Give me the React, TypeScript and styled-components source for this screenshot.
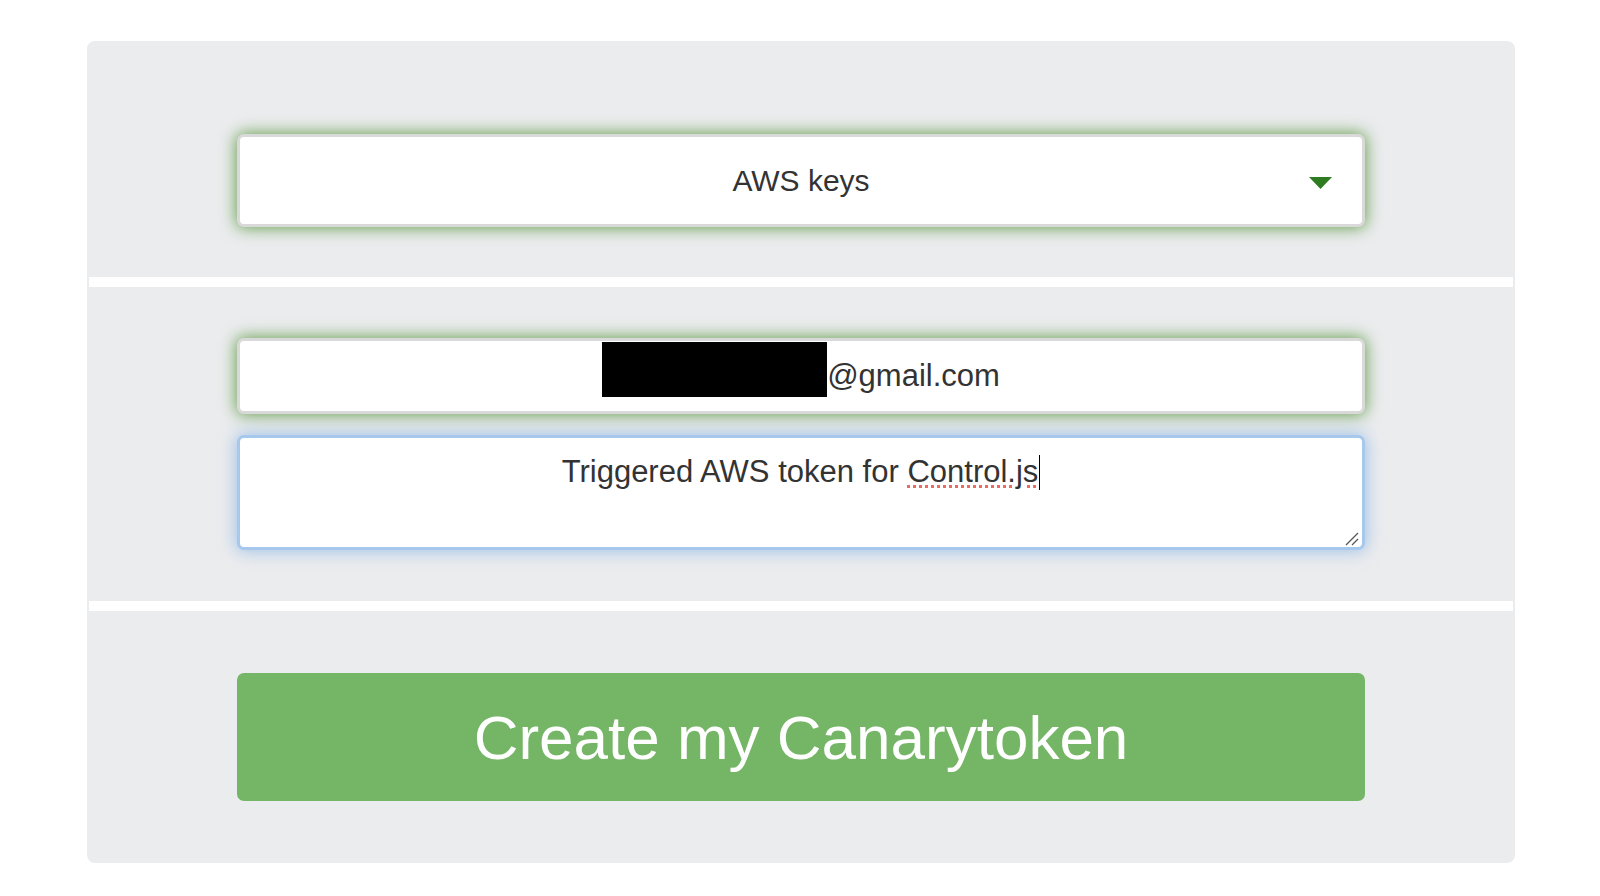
import React from "react";
import styled, { createGlobalStyle } from "styled-components";

const GlobalStyle = createGlobalStyle`
  * { box-sizing: border-box; }
  body {
    margin: 0;
    background: #ffffff;
    font-family: "Liberation Sans", Arial, sans-serif;
    color: #333333;
  }
`;

const Page = styled.main`
  padding: 41px 0 0 87px;
`;

const Panel = styled.form`
  width: 1428px;
  padding: 0 2px;
  background: #ebecee;
  border-radius: 8px;
  overflow: hidden;
`;

const Section = styled.section<{ $pad: string; $divider?: boolean }>`
  display: flex;
  flex-direction: column;
  gap: 21px;
  padding: ${(p) => p.$pad};
  border-top: ${(p) => (p.$divider ? "10px solid #ffffff" : "none")};
`;

const Field = styled.div<{ $height: number; $glow: "green" | "blue"; $size?: number }>`
  position: relative;
  height: ${(p) => p.$height}px;
  background: #ffffff;
  border-radius: 7px;
  border: 3px solid ${(p) => (p.$glow === "green" ? "#d9d9d9" : "#a5c8ec")};
  box-shadow: ${(p) =>
    p.$glow === "green"
      ? "0 0 16px 1px rgba(70, 140, 40, 0.8)"
      : "0 0 16px 2px rgba(110, 165, 225, 0.55)"};
  font-size: ${(p) => p.$size ?? 30}px;
  color: #333333;
  text-align: center;
`;

const SelectValue = styled.div`
  display: flex;
  align-items: center;
  justify-content: center;
  height: 100%;
`;

const Caret = styled.svg`
  position: absolute;
  right: 30px;
  top: 40px;
`;

const EmailValue = styled.div`
  line-height: 70px;
  white-space: nowrap;
`;

const Redacted = styled.span`
  display: inline-block;
  width: 225px;
  height: 55px;
  background: #000000;
  vertical-align: -11px;
`;

const NoteValue = styled.div`
  padding-top: 13px;
  line-height: 42.86px;
  white-space: nowrap;
`;

const Misspelled = styled.span`
  text-decoration-line: underline;
  text-decoration-style: dotted;
  text-decoration-color: #ec6b61;
  text-decoration-thickness: 3px;
  text-underline-offset: 3px;
`;

const Cursor = styled.span`
  display: inline-block;
  width: 1px;
  height: 35px;
  margin-left: 1px;
  background: #000000;
  vertical-align: -8px;
`;

const Grip = styled.svg`
  position: absolute;
  right: 3px;
  bottom: 1px;
`;

const SubmitButton = styled.button`
  height: 128px;
  border: none;
  border-radius: 7px;
  background: #74b566;
  color: #ffffff;
  font-family: "Liberation Sans", Arial, sans-serif;
  font-size: 62px;
  cursor: pointer;
`;

const App = (): JSX.Element => {
  return (
    <>
      <GlobalStyle />
      <Page>
        <Panel onSubmit={(e) => e.preventDefault()}>
          <Section $pad="93px 148px 50px">
            <Field $height={93} $glow="green">
              <SelectValue>AWS keys</SelectValue>
              <Caret width="23" height="12" viewBox="0 0 23 12">
                <polygon points="0,0 23,0 11.5,12" fill="#2d7c1f" />
              </Caret>
            </Field>
          </Section>
          <Section $pad="51px 148px" $divider>
            <Field $height={76} $glow="green" $size={31}>
              <EmailValue>
                <Redacted />
                @gmail.com
              </EmailValue>
            </Field>
            <Field $height={115} $glow="blue" $size={31}>
              <NoteValue>
                Triggered AWS token for <Misspelled>Control.js</Misspelled>
                <Cursor />
              </NoteValue>
              <Grip width="14" height="14" viewBox="0 0 14 14">
                <line x1="1" y1="13" x2="13" y2="1" stroke="#555" strokeWidth="1.2" />
                <line x1="7" y1="13" x2="13" y2="7" stroke="#555" strokeWidth="1.2" />
              </Grip>
            </Field>
          </Section>
          <Section $pad="62px 148px" $divider>
            <SubmitButton type="submit">Create my Canarytoken</SubmitButton>
          </Section>
        </Panel>
      </Page>
    </>
  );
};

export default App;
